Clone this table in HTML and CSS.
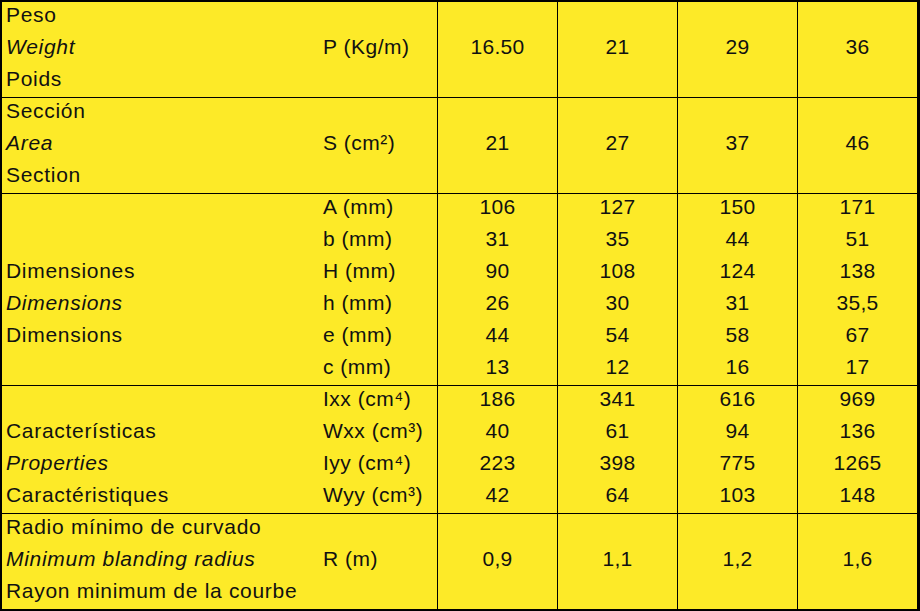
FILE: index.html
```html
<!DOCTYPE html>
<html>
<head>
<meta charset="utf-8">
<link rel="stylesheet" href="styles.css">
</head>
<body>
<div class="table">
  <!-- Row 1 -->
  <div class="cell left">
    <div class="inner">
      <div class="l">Peso</div><div class="u"></div>
      <div class="l it">Weight</div><div class="u">P (Kg/m)</div>
      <div class="l">Poids</div><div class="u"></div>
    </div>
  </div>
  <div class="cell val"><div class="inner"><div></div><div>16.50</div><div></div></div></div>
  <div class="cell val"><div class="inner"><div></div><div>21</div><div></div></div></div>
  <div class="cell val"><div class="inner"><div></div><div>29</div><div></div></div></div>
  <div class="cell val"><div class="inner"><div></div><div>36</div><div></div></div></div>

  <!-- Row 2 -->
  <div class="cell left">
    <div class="inner">
      <div class="l">Sección</div><div class="u"></div>
      <div class="l it">Area</div><div class="u">S (cm²)</div>
      <div class="l">Section</div><div class="u"></div>
    </div>
  </div>
  <div class="cell val"><div class="inner"><div></div><div>21</div><div></div></div></div>
  <div class="cell val"><div class="inner"><div></div><div>27</div><div></div></div></div>
  <div class="cell val"><div class="inner"><div></div><div>37</div><div></div></div></div>
  <div class="cell val"><div class="inner"><div></div><div>46</div><div></div></div></div>

  <!-- Row 3 -->
  <div class="cell left">
    <div class="inner">
      <div class="l"></div><div class="u">A (mm)</div>
      <div class="l"></div><div class="u">b (mm)</div>
      <div class="l">Dimensiones</div><div class="u">H (mm)</div>
      <div class="l it">Dimensions</div><div class="u">h (mm)</div>
      <div class="l">Dimensions</div><div class="u">e (mm)</div>
      <div class="l"></div><div class="u">c (mm)</div>
    </div>
  </div>
  <div class="cell val"><div class="inner"><div>106</div><div>31</div><div>90</div><div>26</div><div>44</div><div>13</div></div></div>
  <div class="cell val"><div class="inner"><div>127</div><div>35</div><div>108</div><div>30</div><div>54</div><div>12</div></div></div>
  <div class="cell val"><div class="inner"><div>150</div><div>44</div><div>124</div><div>31</div><div>58</div><div>16</div></div></div>
  <div class="cell val"><div class="inner"><div>171</div><div>51</div><div>138</div><div>35,5</div><div>67</div><div>17</div></div></div>

  <!-- Row 4 -->
  <div class="cell left">
    <div class="inner">
      <div class="l"></div><div class="u">Ixx (cm⁴)</div>
      <div class="l">Características</div><div class="u">Wxx (cm³)</div>
      <div class="l it">Properties</div><div class="u">Iyy (cm⁴)</div>
      <div class="l">Caractéristiques</div><div class="u">Wyy (cm³)</div>
    </div>
  </div>
  <div class="cell val"><div class="inner"><div>186</div><div>40</div><div>223</div><div>42</div></div></div>
  <div class="cell val"><div class="inner"><div>341</div><div>61</div><div>398</div><div>64</div></div></div>
  <div class="cell val"><div class="inner"><div>616</div><div>94</div><div>775</div><div>103</div></div></div>
  <div class="cell val"><div class="inner"><div>969</div><div>136</div><div>1265</div><div>148</div></div></div>

  <!-- Row 5 -->
  <div class="cell left">
    <div class="inner">
      <div class="l">Radio mínimo de curvado</div><div class="u"></div>
      <div class="l it">Minimum blanding radius</div><div class="u">R (m)</div>
      <div class="l">Rayon minimum de la courbe</div><div class="u"></div>
    </div>
  </div>
  <div class="cell val"><div class="inner"><div></div><div>0,9</div><div></div></div></div>
  <div class="cell val"><div class="inner"><div></div><div>1,1</div><div></div></div></div>
  <div class="cell val"><div class="inner"><div></div><div>1,2</div><div></div></div></div>
  <div class="cell val"><div class="inner"><div></div><div>1,6</div><div></div></div></div>
</div>
</body>
</html>
```

FILE: styles.css
```css
html, body {
  margin: 0;
  padding: 0;
  background: #000;
}

.table {
  width: 920px;
  height: 611px;
  box-sizing: border-box;
  display: grid;
  grid-template-columns: 435px repeat(4, 119px);
  grid-template-rows: 95px 95px 191px 127px 95px;
  gap: 1px;
  background: #000;
  border-top: 2px solid #000;
  border-left: 2px solid #000;
  border-right: 3px solid #000;
  border-bottom: 2px solid #000;
  font-family: "Liberation Sans", Arial, sans-serif;
  font-size: 21px;
  color: #111;
}

.cell {
  background: #fdea28;
  overflow: hidden;
}

.inner {
  margin-top: -3px;
}

.left .inner {
  display: grid;
  grid-template-columns: 321px 114px;
  grid-auto-rows: 32px;
  line-height: 32px;
}

.left .l {
  padding-left: 4px;
  white-space: nowrap;
  letter-spacing: 0.7px;
}

.left .u {
  white-space: nowrap;
  letter-spacing: 0.5px;
}

.it {
  font-style: italic;
}

.val .inner > div {
  height: 32px;
  line-height: 32px;
  text-align: center;
  letter-spacing: 0.3px;
}
```
